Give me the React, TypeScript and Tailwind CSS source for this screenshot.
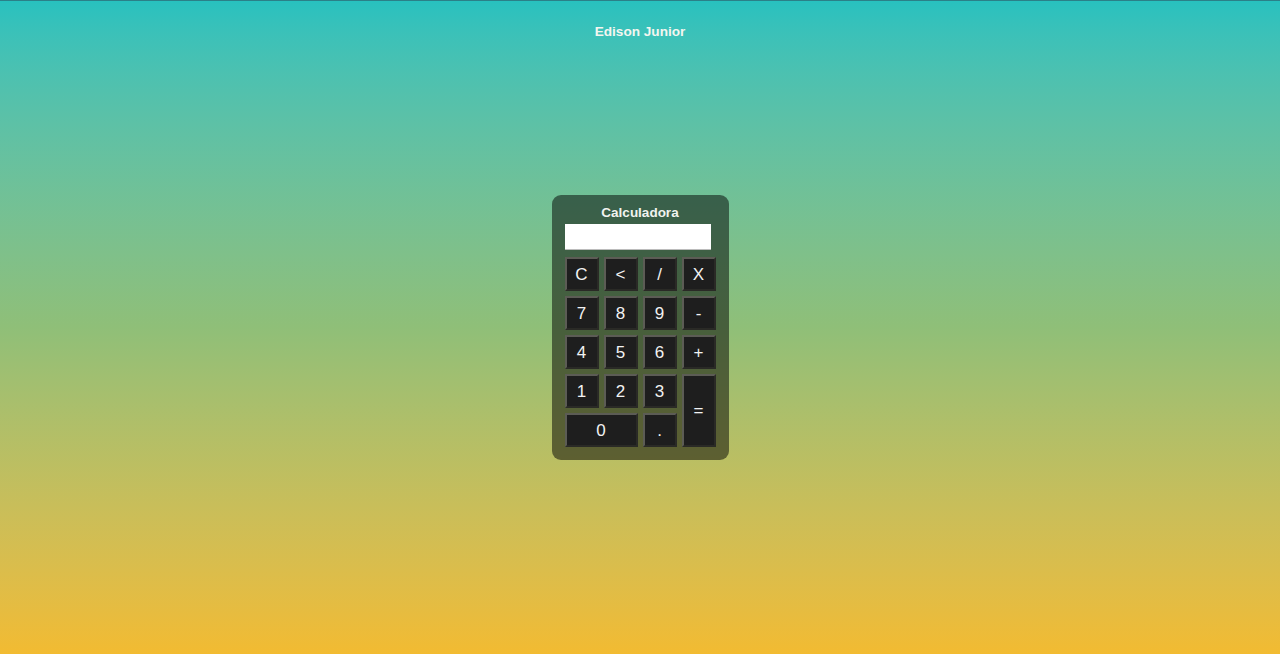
import React from 'react'

type Key = { label: string; cls?: string }

// keypad layout, grid placement done with explicit spans
const keys: Key[] = [
  { label: 'C' },
  { label: '<' },
  { label: '/' },
  { label: 'X' },
  { label: '7' },
  { label: '8' },
  { label: '9' },
  { label: '-' },
  { label: '4' },
  { label: '5' },
  { label: '6' },
  { label: '+' },
  { label: '1' },
  { label: '2' },
  { label: '3' },
  { label: '=', cls: 'row-span-2 h-[73px]' },
  { label: '0', cls: 'col-span-2 w-[73px]' },
  { label: '.' },
]

export default function App() {
  return (
    <div
      className="h-screen w-full overflow-hidden bg-gradient-to-b from-[#27c1bf] via-[#8fbf78] to-[#f2bb31] text-white"
      style={{ fontFamily: '"Liberation Sans", Arial, sans-serif' }}
    >
      <div className="h-px w-full bg-[#2b8088]" />
      <header className="flex justify-center pt-[22px] pb-[21px]">
        <h1 className="text-[13.6px] font-bold leading-[18px] text-[#f4f6f0]">Edison Junior</h1>
      </header>

      <div className="mt-[133px] flex justify-center">
        <div className="w-[177px] rounded-[9px] bg-black/50 px-[13px] pt-[10px] pb-[13px]">
          <h2 className="mb-[3px] text-center text-[13.5px] font-bold leading-[16px] text-[#f1f3ef]">Calculadora</h2>
          <div className="h-[26px] w-[146px] border-b border-[#bcbcbc] bg-white" />
          <div className="mt-[7px] grid grid-cols-[repeat(4,34px)] grid-rows-[repeat(5,34px)] gap-[5px]">
            {keys.map((k) => (
              <button
                key={k.label}
                className={`flex h-[34px] w-[34px] items-center justify-center border-2 border-t-[#5c5c55] border-l-[#5c5c55] border-r-[#2a2a26] border-b-[#2a2a26] bg-[#1e1e1e] text-[17px] leading-none text-[#f2f2f2] ${k.cls ?? ''}`}
              >
                {k.label}
              </button>
            ))}
          </div>
        </div>
      </div>
    </div>
  )
}
